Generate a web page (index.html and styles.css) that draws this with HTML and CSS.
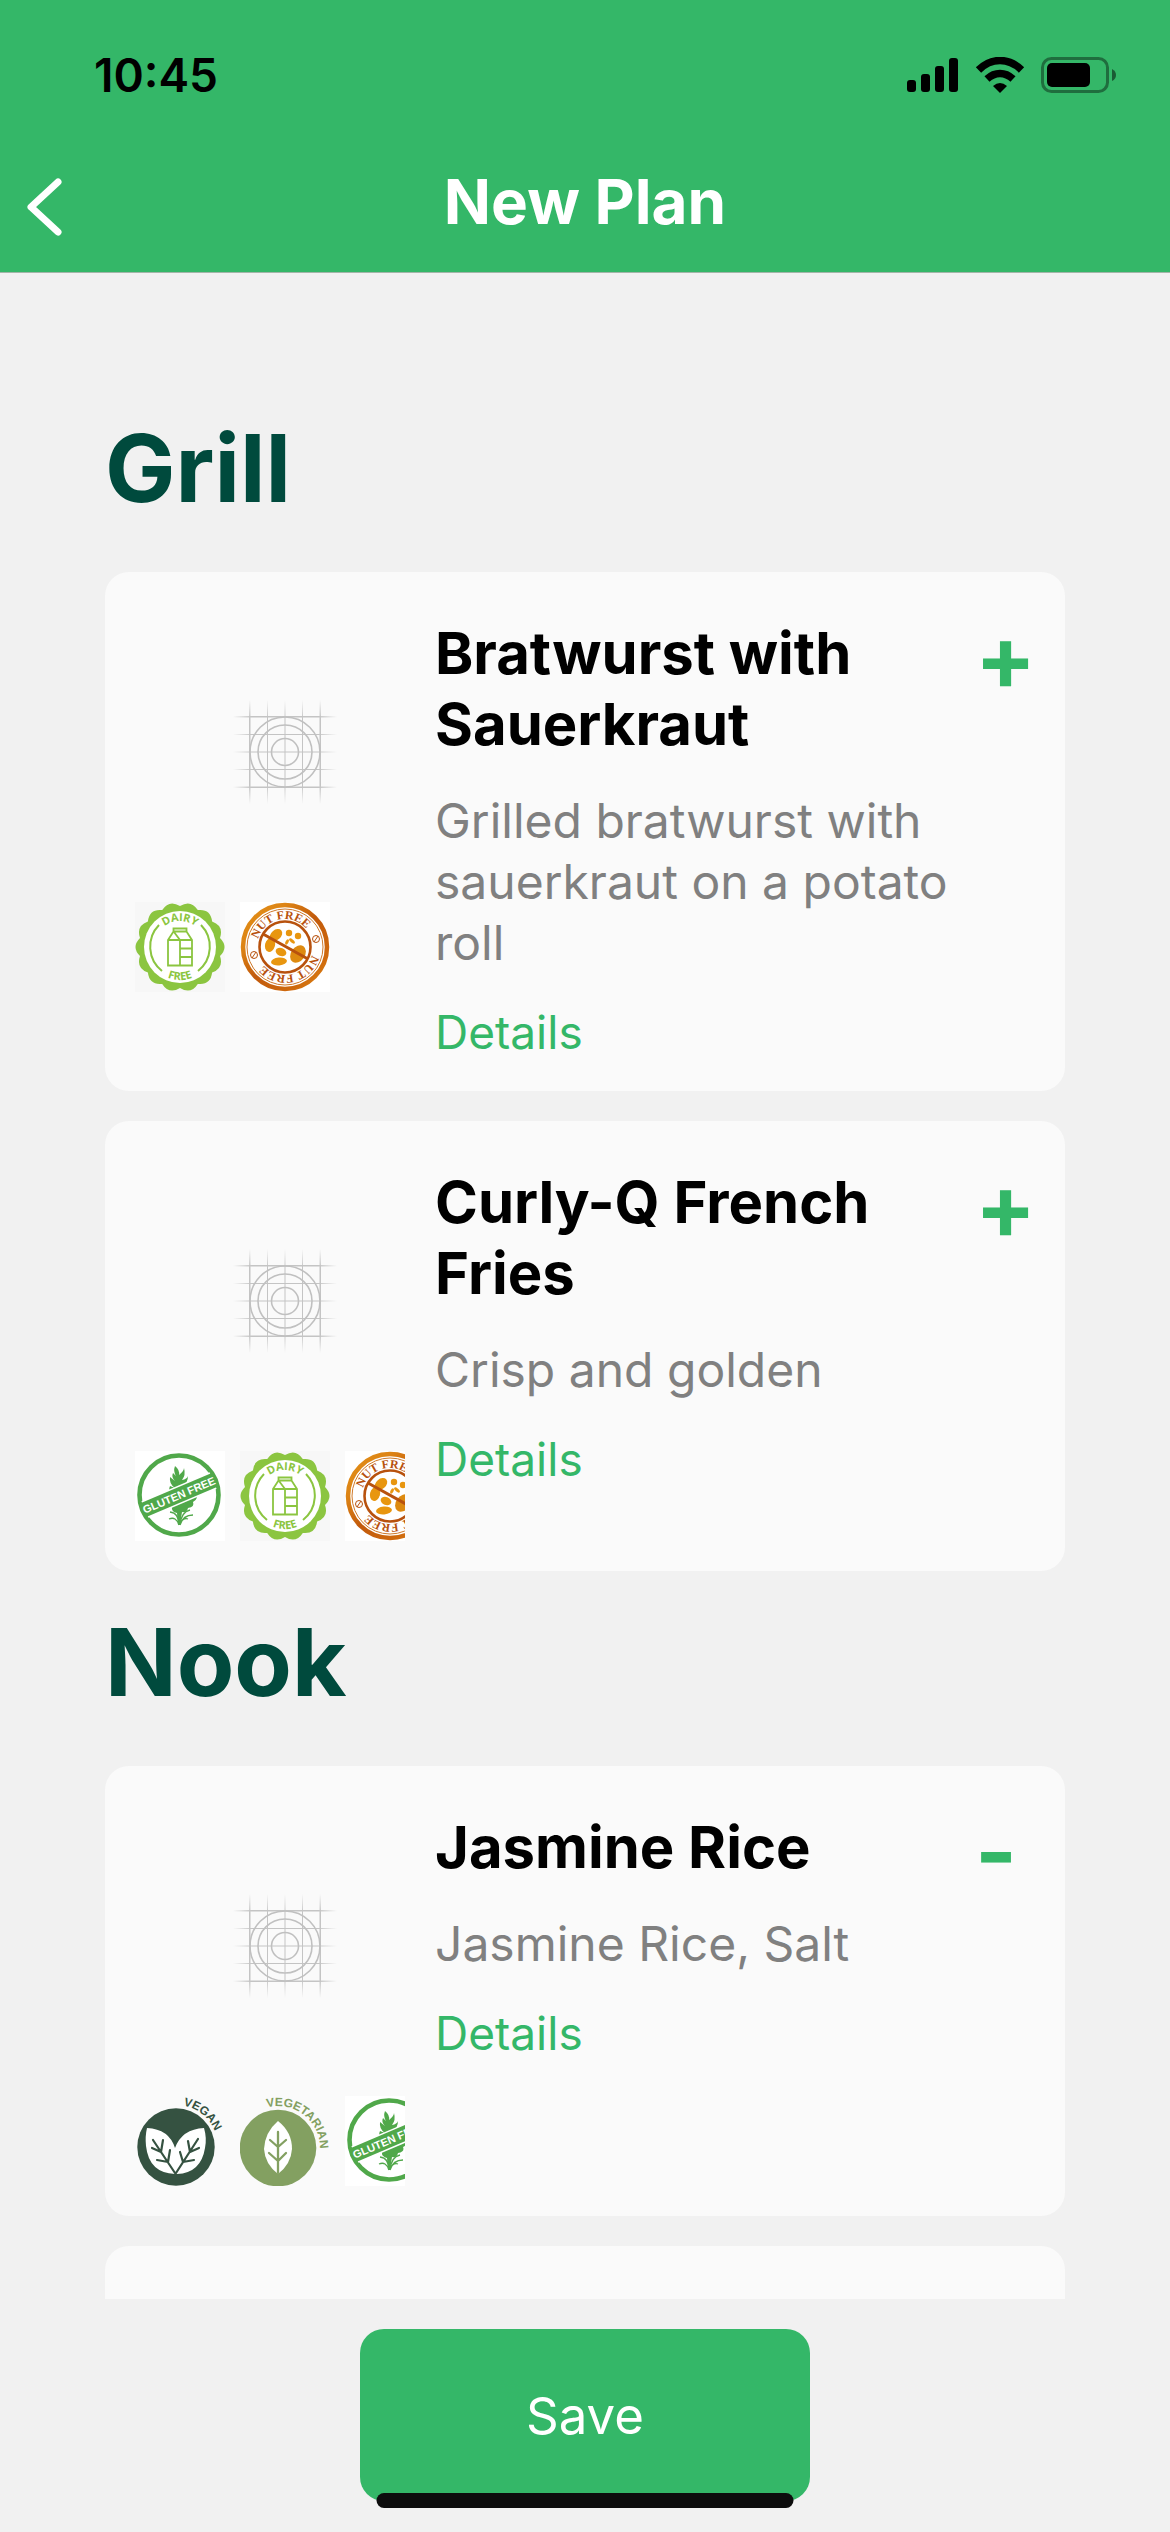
FILE: index.html
```html
<!DOCTYPE html>
<html lang="en">
<head>
<meta charset="utf-8">
<meta name="viewport" content="width=device-width, initial-scale=1">
<title>New Plan</title>
<link rel="stylesheet" href="styles.css">
</head>
<body>
<svg class="defs" width="0" height="0" aria-hidden="true">
  <defs>
    <linearGradient id="fade-x" gradientUnits="userSpaceOnUse" x1="-52" y1="0" x2="52" y2="0">
      <stop offset="0" stop-color="#c4c4c4" stop-opacity="0"/><stop offset="0.18" stop-color="#c4c4c4"/><stop offset="0.82" stop-color="#c4c4c4"/><stop offset="1" stop-color="#c4c4c4" stop-opacity="0"/>
    </linearGradient>
    <linearGradient id="fade-y" gradientUnits="userSpaceOnUse" x1="0" y1="-52" x2="0" y2="52">
      <stop offset="0" stop-color="#c4c4c4" stop-opacity="0"/><stop offset="0.18" stop-color="#c4c4c4"/><stop offset="0.82" stop-color="#c4c4c4"/><stop offset="1" stop-color="#c4c4c4" stop-opacity="0"/>
    </linearGradient>
    <linearGradient id="rust" x1="0" y1="0" x2="1" y2="1">
      <stop offset="0" stop-color="#e29018"/><stop offset="0.25" stop-color="#dd8415"/><stop offset="0.5" stop-color="#c25a0c"/><stop offset="0.8" stop-color="#cf6a0e"/><stop offset="1" stop-color="#e08a14"/>
    </linearGradient>
    <path id="dairy-top" d="M-26 0A26 26 0 0 1 26 0"/>
    <path id="dairy-bottom" d="M-33 0A33 33 0 0 0 33 0"/>
    <path id="nut-arc" d="M-28 0A28 28 0 0 1 28 0"/>
    <path id="vegan-arc" d="M-42 0A42 42 0 0 1 42 0A42 42 0 0 1 0 42"/>
    <symbol id="placeholder" viewBox="-55 -55 110 110">
      <path fill="url(#fade-y)" d="M-36 -52h1.500v104h-1.500zM-18 -52h1v104h-1zM-.5 -52h1v104h-1zM17 -52h1v104h-1zM34.500 -52h1.500v104h-1.500z"/>
      <path fill="url(#fade-x)" d="M-52 -36v1.500h104v-1.500zM-52 -18v1h104v-1zM-52 -.5v1h104v-1zM-52 17v1h104v-1zM-52 34.500v1.500h104v-1.500z"/>
      <g fill="none" stroke="#c0c0c0" stroke-width="1.600">
        <circle r="35"/><circle r="27"/><circle r="13.500"/>
      </g>
    </symbol>
    <symbol id="dairy" viewBox="-45 -45 90 90">
      <path fill="#f7f7f7" d="M-45-45h90v90h-90z"/>
      <path fill="#8bc540" d="M40 9.100Q44.100 21.300 32.100 25.600Q30.600 38.300 17.800 36.900Q10.900 47.800 0 41Q-10.900 47.800-17.800 36.900Q-30.600 38.300-32.100 25.600Q-44.100 21.300-40 9.100Q-49 0-40-9.100Q-44.100-21.300-32.100-25.600Q-30.600-38.300-17.800-36.900Q-10.900-47.800 0-41Q10.900-47.800 17.800-36.900Q30.600-38.300 32.100-25.600Q44.100-21.300 40-9.100Q49 0 40 9.100Z"/>
      <circle r="36" fill="#fff"/>
      <g fill="none" stroke="#8bc540" stroke-width="2">
        <path d="M-21-22A31 31 0 0 0-18 24M21-22A31 31 0 0 1 18 24"/>
        <path stroke-width="1.800" d="M-6.500-18.500h13v3h-13zM-6.500-15.500L-12-7V18.500H12V-7L6.500-15.500M-12-7H12M0-7V18.500M-6-15L0-7M0 1.500H12M0 10H12"/>
      </g>
      <g class="stamp stamp-dairy" fill="#8bc540">
        <text><textPath href="#dairy-top" startOffset="50%">DAIRY</textPath></text>
        <text><textPath href="#dairy-bottom" startOffset="50%">FREE</textPath></text>
      </g>
    </symbol>
    <symbol id="nut" viewBox="-45 -45 90 90">
      <path fill="#fff" d="M-45-45h90v90h-90z"/>
      <circle r="42" fill="none" stroke="url(#rust)" stroke-width="4.500"/>
      <circle r="38" fill="none" stroke="#cf7a2c" stroke-width="1"/>
      <g fill="#e8960f">
        <ellipse cx="-9" cy="-12" rx="7" ry="5" transform="rotate(-40 -9 -12)"/>
        <ellipse cx="-15" cy="-2" rx="5" ry="7" transform="rotate(15 -15 -2)"/>
        <circle cx="4" cy="-14" r="3.200"/><circle cx="13" cy="-11" r="3.200"/>
        <ellipse cx="2" cy="-5" rx="1.500" ry="3" transform="rotate(30 2 -5)"/>
        <ellipse cx="7" cy="-6" rx="1.500" ry="3.500" transform="rotate(-50 7 -6)"/>
        <ellipse cx="-4" cy="5" rx="5.500" ry="4" transform="rotate(20 -4 5)"/>
        <ellipse cx="-6" cy="14.500" rx="8" ry="4" transform="rotate(-5 -6 14.500)"/>
        <ellipse cx="13" cy="7" rx="7" ry="9.500" transform="rotate(35 13 7)" fill="#dd8a10"/>
      </g>
      <g fill="none" stroke="#b8520e">
        <circle r="25.500" stroke-width="2.600"/>
        <path stroke-width="3" d="M-22-13L23 12"/>
        <path stroke-width="1" d="M33-11L29-5M-29 5L-33 11"/>
        <circle cx="31" cy="-8" r="3.500" stroke-width="1"/><circle cx="-31" cy="8" r="3.500" stroke-width="1"/>
      </g>
      <g class="stamp stamp-nut" fill="#b8520e">
        <text transform="rotate(-12)"><textPath href="#nut-arc" startOffset="50%">NUT FREE</textPath></text>
        <text transform="rotate(168)"><textPath href="#nut-arc" startOffset="50%">NUT FREE</textPath></text>
      </g>
    </symbol>
    <symbol id="gluten" viewBox="-45 -45 90 90">
      <path fill="#fff" d="M-45-45h90v90h-90z"/>
      <g transform="translate(-1 -1)">
        <circle r="39.500" fill="none" stroke="#50a84a" stroke-width="4.600"/>
        <g fill="#50a84a">
          <path d="M-4-29Q1-25 0-20Q5-24 5-27Q7-20 3-15Q8-16 9-19Q9-12 3-8L10-11Q8-4 2-1H-8Q-11-5-9-9L-4-7Q-10-11-9-18L-4-14Q-8-18-6-22L-3-19Q-6-24-4-29Z"/>
          <path d="M-7 11Q-1 8 4 3L17-3Q20 4 14 7Q16 12 9 13Q8 18 3 17L1 30H-1L-2 18Q-8 17-7 11Z"/>
        </g>
        <path fill="none" stroke="#50a84a" stroke-width="1.300" d="M0 30Q0 18-9 17M0 30Q-3 21-10 24M1 30Q2 17 11 15M1 30Q4 20 14 20M0 29Q5 22 9 24"/>
        <g transform="rotate(-23)">
          <path fill="#fff" d="M-37-9h74v18h-74z"/>
          <path fill="#50a84a" d="M-40-7.500h80v15h-80z"/>
          <text class="stamp stamp-gluten" y="4" fill="#fff">GLUTEN FREE</text>
        </g>
      </g>
    </symbol>
    <symbol id="vegan" viewBox="0 0 90 90">
      <circle cx="41" cy="51" r="38.700" fill="#355241"/>
      <path fill="#fff" d="M40 78Q14 77 11 50Q10 40 12 32Q34 33 40 52Q47 33 69 32Q72 42 70 52Q66 77 42 78Z"/>
      <path fill="none" stroke="#355241" stroke-width="2.200" stroke-linecap="round" d="M40 77L18 44M41 77L63 43M26 56L28 44M26 56L17 52M33 66L35 54M33 66L22 64M55 56L53 45M55 56L64 52M48 66L45 56M48 66L59 64"/>
      <g class="stamp stamp-vegan" fill="#355241" transform="translate(41 51)">
        <text transform="rotate(39)"><textPath href="#vegan-arc" startOffset="33.3%">VEGAN</textPath></text>
      </g>
    </symbol>
    <symbol id="vegetarian" viewBox="0 0 90 90">
      <circle cx="38" cy="52" r="38.300" fill="#83a061"/>
      <path fill="#fff" d="M38 25Q52 36 52 53Q51 68 38 78Q25 68 24 53Q25 36 38 25Z"/>
      <path fill="none" stroke="#83a061" stroke-width="2.300" stroke-linecap="round" d="M38 36V77M38 51L30 44M38 51L46 44M38 65L29 57M38 65L46 57"/>
      <g class="stamp stamp-vegan" fill="#83a061" transform="translate(38 52)">
        <text transform="rotate(38)"><textPath href="#vegan-arc" startOffset="33.3%">VEGETARIAN</textPath></text>
      </g>
    </symbol>
  </defs>
</svg>

<div class="app">
  <header class="header">
    <div class="status">
      <span class="status-time">10:45</span>
      <div class="status-icons">
        <svg width="52" height="36" viewBox="0 0 52 36" aria-hidden="true"><rect x="0" y="23" width="9" height="12" rx="3"/><rect x="14" y="17" width="9" height="18" rx="3"/><rect x="28" y="9" width="9" height="26" rx="3"/><rect x="42" y="1" width="9" height="34" rx="3"/></svg>
        <svg width="50" height="36" viewBox="0 0 50 36" aria-hidden="true"><g fill="none" stroke="#000" stroke-width="7.500"><path d="M3.500 13Q13 3.500 25 3.500T46.500 13"/><path d="M12 22Q18 16.500 25 16.500T38 22"/></g><path d="M18 29Q25 23 32 29L25 36Z"/></svg>
        <svg width="76" height="36" viewBox="0 0 76 36" aria-hidden="true"><rect x="1.500" y="1.500" width="65" height="33" rx="9" fill="none" stroke="#000" stroke-opacity=".4" stroke-width="3"/><rect x="6" y="6" width="43" height="24" rx="5"/><path fill-opacity=".5" d="M71 12Q75 14 75 18T71 24Z"/></svg>
      </div>
    </div>
    <div class="nav">
      <button class="back" type="button" aria-label="Back"><svg width="36" height="58" viewBox="0 0 36 58" aria-hidden="true"><path d="M31 4L4 29L31 54" fill="none" stroke="#fff" stroke-width="7" stroke-linecap="round" stroke-linejoin="round"/></svg></button>
      <h1 class="title">New Plan</h1>
    </div>
  </header>

  <main class="menu">
    <section>
      <h2 class="station">Grill</h2>
      <div class="cards">
        <article class="card">
          <div class="media">
            <div class="photo"><svg width="110" height="110" aria-hidden="true"><use href="#placeholder"/></svg></div>
            <div class="badges">
              <svg class="badge"><use href="#dairy"/></svg>
              <svg class="badge"><use href="#nut"/></svg>
            </div>
          </div>
          <div class="info">
            <h3 class="name">Bratwurst with Sauerkraut</h3>
            <p class="desc">Grilled bratwurst with sauerkraut on a potato roll</p>
            <a class="details" href="#">Details</a>
          </div>
          <button class="toggle" type="button">+</button>
        </article>
        <article class="card">
          <div class="media">
            <div class="photo"><svg width="110" height="110" aria-hidden="true"><use href="#placeholder"/></svg></div>
            <div class="badges">
              <svg class="badge"><use href="#gluten"/></svg>
              <svg class="badge"><use href="#dairy"/></svg>
              <svg class="badge"><use href="#nut"/></svg>
            </div>
          </div>
          <div class="info">
            <h3 class="name">Curly-Q French Fries</h3>
            <p class="desc">Crisp and golden</p>
            <a class="details" href="#">Details</a>
          </div>
          <button class="toggle" type="button">+</button>
        </article>
      </div>
    </section>
    <section>
      <h2 class="station">Nook</h2>
      <div class="cards">
        <article class="card">
          <div class="media">
            <div class="photo"><svg width="110" height="110" aria-hidden="true"><use href="#placeholder"/></svg></div>
            <div class="badges">
              <svg class="badge"><use href="#vegan"/></svg>
              <svg class="badge"><use href="#vegetarian"/></svg>
              <svg class="badge"><use href="#gluten"/></svg>
            </div>
          </div>
          <div class="info">
            <h3 class="name">Jasmine Rice</h3>
            <p class="desc">Jasmine Rice, Salt</p>
            <a class="details" href="#">Details</a>
          </div>
          <button class="toggle" type="button">-</button>
        </article>
        <article class="card"></article>
      </div>
    </section>
  </main>

  <footer class="footer">
    <button class="save" type="button">Save</button>
    <div class="home-indicator"></div>
  </footer>
</div>
</body>
</html>
```
FILE: styles.css
```css
* {
  box-sizing: border-box;
}

body,
h1,
h2,
h3,
p {
  margin: 0;
}

body {
  background: #f1f1f1;
  color: #000;
  font-family: Inter, "Liberation Sans", sans-serif;
}

button {
  padding: 0;
  border: 0;
  background: none;
  font-family: inherit;
}

.defs {
  position: absolute;
}

.app {
  display: flex;
  flex-direction: column;
  height: 100vh;
}

/* Header */

.header {
  flex: none;
  padding-bottom: 10px;
  border-bottom: 1px solid #a3b5a9;
  background: #34b768;
}

.status {
  display: flex;
  align-items: center;
  justify-content: space-between;
  height: 141px;
  padding: 8px 53px 0 94px;
}

.status-time {
  font-size: 46px;
  font-weight: 600;
}

.status-icons {
  display: flex;
  align-items: center;
  gap: 16px;
}

.nav {
  display: grid;
  grid-template-columns: 90px 1fr 90px;
  align-items: center;
  height: 121px;
}

.back {
  display: flex;
  padding: 10px 0 0 27px;
}

.title {
  color: #fff;
  font-size: 62px;
  font-weight: 700;
  line-height: 80px;
  text-align: center;
}

/* Menu list */

.menu {
  flex: 1;
  min-height: 0;
  padding: 104px 105px 0;
  overflow-y: auto;
  scrollbar-width: none;
}

.station {
  padding: 33px 0 46px;
  color: #004a3d;
  font-size: 94px;
  font-weight: 700;
  line-height: 116px;
}

.cards {
  display: flex;
  flex-direction: column;
  gap: 30px;
}

.card {
  display: grid;
  grid-template-columns: 270px 1fr 60px;
  column-gap: 15px;
  align-items: start;
  min-height: 450px;
  padding: 0 30px;
  border-radius: 24px;
  background: #fafafa;
}

.media {
  padding: 30px 0;
  overflow: hidden;
}

.photo {
  display: flex;
  align-items: center;
  justify-content: center;
  height: 300px;
  padding-left: 30px;
}

.badges {
  display: flex;
  gap: 15px;
}

.badge {
  flex: none;
  width: 90px;
  height: 90px;
}

.info {
  display: flex;
  flex-direction: column;
  align-items: flex-start;
  gap: 30px;
  padding: 46px 0 30px 15px;
}

.name {
  font-size: 58px;
  font-weight: 700;
  line-height: 71px;
}

.desc {
  color: #808080;
  font-size: 48px;
  line-height: 61px;
}

.details {
  color: #34b768;
  font-size: 46px;
  line-height: 58px;
  text-decoration: none;
}

.toggle {
  padding-top: 46px;
  color: #34b768;
  font-size: 90px;
  font-weight: 700;
  line-height: 80px;
  text-align: left;
}

/* Lettering inside the diet badges */

.stamp {
  font-family: "Liberation Sans", sans-serif;
  font-weight: 700;
  text-anchor: middle;
}

.stamp-dairy {
  font-family: "Open Sans", sans-serif;
  font-size: 11px;
}

.stamp-nut {
  font-family: "Liberation Serif", serif;
  font-size: 12px;
}

.stamp-gluten {
  font-size: 11px;
}

.stamp-vegan {
  font-size: 12px;
}

/* Footer */

.footer {
  position: relative;
  display: flex;
  flex: none;
  justify-content: center;
  padding: 30px 0 31px;
}

.save {
  width: 450px;
  height: 172px;
  border-radius: 24px;
  background: #34b768;
  color: #fff;
  font-size: 51px;
}

.home-indicator {
  position: absolute;
  bottom: 24px;
  left: 50%;
  width: 417px;
  height: 15px;
  border-radius: 8px;
  background: #0d0d0d;
  transform: translateX(-50%);
}
```
